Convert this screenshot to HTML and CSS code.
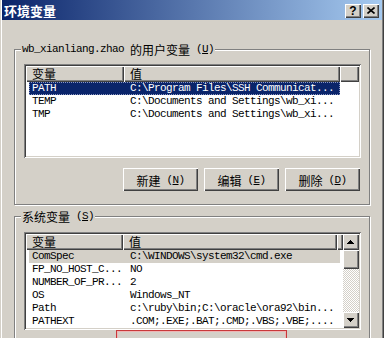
FILE: index.html
```html
<!DOCTYPE html>
<html>
<head>
<meta charset="utf-8">
<link rel="stylesheet" href="styles.css">
</head>
<body>
<div class="window">
  <div class="titlebar">
    <span class="title">环境变量</span>
    <div class="caps">
      <div class="cap"><span class="q">?</span></div>
      <div class="cap"><svg width="8" height="7" viewBox="0 0 8 7"><path d="M0.5 0.5 L7.5 6.5 M7.5 0.5 L0.5 6.5" stroke="#000" stroke-width="1.6" fill="none"/></svg></div>
    </div>
  </div>
  <div class="content">
    <div class="group g1">
      <div class="legend">wb_xianliang.zhao <span class="cjk">的用户变量</span> (<u>U</u>)</div>
      <div class="lv lv1">
        <div class="hdr">
          <div class="hc hc1"><span class="cjk">变量</span></div>
          <div class="hc hc2"><span class="cjk">值</span></div>
          <div class="hc hcf"></div>
        </div>
        <div class="row sel"><div class="c1">PATH</div><div class="c2">C:\Program Files\SSH Communicat...</div></div>
        <div class="row"><div class="c1">TEMP</div><div class="c2">C:\Documents and Settings\wb_xi...</div></div>
        <div class="row"><div class="c1">TMP</div><div class="c2">C:\Documents and Settings\wb_xi...</div></div>
      </div>
      <div class="btns">
        <div class="btn"><span class="cjk">新建</span>&nbsp;(<u>N</u>)</div>
        <div class="btn"><span class="cjk">编辑</span>&nbsp;(<u>E</u>)</div>
        <div class="btn"><span class="cjk">删除</span>&nbsp;(<u>D</u>)</div>
      </div>
    </div>
    <div class="group g2">
      <div class="legend"><span class="cjk">系统变量</span> (<u>S</u>)</div>
      <div class="lv lv2">
        <div class="lvmain">
          <div class="hdr">
            <div class="hc hc1"><span class="cjk">变量</span></div>
            <div class="hc hc2"><span class="cjk">值</span></div>
            <div class="hc hcf"></div>
          </div>
          <div class="row inact"><div class="c1">ComSpec</div><div class="c2">C:\WINDOWS\system32\cmd.exe</div></div>
          <div class="row"><div class="c1">FP_NO_HOST_C...</div><div class="c2">NO</div></div>
          <div class="row"><div class="c1">NUMBER_OF_PR...</div><div class="c2">2</div></div>
          <div class="row"><div class="c1">OS</div><div class="c2">Windows_NT</div></div>
          <div class="row"><div class="c1">Path</div><div class="c2">c:\ruby\bin;C:\oracle\ora92\bin...</div></div>
          <div class="row"><div class="c1">PATHEXT</div><div class="c2">.COM;.EXE;.BAT;.CMD;.VBS;.VBE;....</div></div>
        </div>
        <div class="sbar">
          <div class="sbtn"><svg width="7" height="4" viewBox="0 0 7 4"><path d="M3 0h1v1h1v1h1v1h1v1H0V3h1V2h1V1h1z" fill="#000"/></svg></div>
          <div class="thumb"></div>
          <div class="track"></div>
          <div class="sbtn"><svg width="7" height="4" viewBox="0 0 7 4"><path d="M0 0h7v1H6v1H5v1H4v1H3V3H2V2H1V1H0z" fill="#000"/></svg></div>
        </div>
      </div>
    </div>
  </div>
  <div class="mark"></div>
</div>
</body>
</html>
```
FILE: styles.css
```css
html, body {
  margin: 0;
  padding: 0;
}
body {
  width: 384px;
  height: 338px;
  overflow: hidden;
  background: #d4d0c8;
  font-family: "Liberation Mono", "Noto Sans CJK SC", monospace;
  font-size: 11px;
  letter-spacing: -0.6px;
  color: #000;
}
.window {
  position: relative;
  height: 338px;
  box-sizing: border-box;
  padding: 0 2px;
  overflow: hidden;
  box-shadow: inset 1px 0 #d4d0c8, inset 2px 0 #fff, inset -1px 0 #404040, inset -2px 0 #808080;
}
.cjk {
  font-family: "Noto Sans CJK SC", sans-serif;
  font-size: 12px;
  letter-spacing: 0;
}
u {
  text-decoration: underline;
  text-underline-offset: 1px;
}
.titlebar {
  height: 20px;
  display: flex;
  align-items: center;
  background: linear-gradient(to right, #0a246a, #a6caf0);
  padding: 0 3px 0 2px;
}
.title {
  font-family: "Noto Sans CJK SC", sans-serif;
  font-weight: bold;
  font-size: 13px;
  letter-spacing: 0;
  color: #fff;
  line-height: 20px;
  padding-top: 1px;
}
.caps {
  margin-left: auto;
  display: flex;
  gap: 2px;
  padding-top: 1px;
}
.cap {
  width: 16px;
  height: 14px;
  background: #d4d0c8;
  box-shadow: inset 1px 1px #fff, inset -1px -1px #404040, inset -2px -2px #808080;
  display: flex;
  align-items: center;
  justify-content: center;
}
.q {
  font-family: "Liberation Sans", sans-serif;
  font-weight: bold;
  font-size: 12px;
  letter-spacing: 0;
  line-height: 12px;
}
.content {
  padding-left: 12px;
}
.group {
  width: 356px;
  box-sizing: border-box;
  border: 1px solid #808080;
  box-shadow: inset 1px 1px #fff, 1px 1px #fff;
}
.g1 {
  margin-top: 29px;
  height: 156px;
}
.g2 {
  margin-top: 11px;
  height: 122px;
  border-bottom: 0;
}
.legend {
  display: flex;
  align-items: center;
  width: max-content;
  height: 13px;
  line-height: 13px;
  margin: -7px 0 0 6px;
  padding: 0 1px;
  background: #d4d0c8;
  white-space: pre;
}
.lv {
  width: 337px;
  height: 94px;
  box-sizing: border-box;
  padding: 2px;
  background: #fff;
  box-shadow: inset 1px 1px #808080, inset -1px -1px #fff, inset 2px 2px #404040, inset -2px -2px #d4d0c8;
}
.lv1 {
  margin: 8px 0 0 9px;
}
.lv2 {
  margin: 9px 0 0 9px;
  height: 98px;
  display: flex;
}
.lvmain {
  flex: 1;
  min-width: 0;
}
.hdr {
  display: flex;
  height: 16px;
}
.hc {
  box-sizing: border-box;
  height: 16px;
  line-height: 16px;
  padding-left: 6px;
  background: #d4d0c8;
  box-shadow: inset 1px 1px #fff, inset -1px -1px #404040, inset -2px -2px #808080;
  display: flex;
  align-items: center;
}
.hc1 { width: 98px; }
.hc2 { width: 216px; }
.hcf { flex: 1; }
.row {
  display: flex;
  width: 311px;
  height: 13px;
  line-height: 13px;
  margin-left: 3px;
  white-space: pre;
  overflow: hidden;
}
.c1 {
  width: 95px;
  box-sizing: border-box;
  padding-left: 3px;
  overflow: hidden;
}
.c2 {
  width: 216px;
  box-sizing: border-box;
  padding-left: 6px;
  overflow: hidden;
}
.sel {
  background: #0a246a;
  color: #fff;
  outline: 1px dotted #8a96c0;
  outline-offset: -1px;
}
.inact {
  background: #d4d0c8;
}
.btns {
  display: flex;
  gap: 6px;
  margin: 10px 0 0 108px;
}
.btn {
  width: 75px;
  height: 23px;
  box-sizing: border-box;
  display: flex;
  align-items: center;
  justify-content: center;
  background: #d4d0c8;
  box-shadow: inset 1px 1px #fff, inset -1px -1px #404040, inset -2px -2px #808080;
  white-space: pre;
  padding-top: 1px;
}
.sbar {
  width: 16px;
  display: flex;
  flex-direction: column;
}
.sbtn, .thumb {
  background: #d4d0c8;
  box-shadow: inset 1px 1px #fff, inset -1px -1px #404040, inset -2px -2px #808080;
}
.sbtn {
  height: 16px;
  display: flex;
  align-items: center;
  justify-content: center;
}
.sbtn svg {
  display: block;
  margin-left: -1px;
}
.thumb {
  height: 19px;
}
.track {
  flex: 1;
  background: repeating-conic-gradient(#fff 0 25%, #d4d0c8 0 50%) 0 0 / 2px 2px;
}
.mark {
  position: absolute;
  left: 116px;
  top: 330px;
  width: 171px;
  height: 8px;
  box-sizing: border-box;
  border: 1px solid #c8383a;
  border-bottom: 0;
  box-shadow: inset 1px 1px #eeb4b4, inset -1px 0 #eeb4b4;
}
```
